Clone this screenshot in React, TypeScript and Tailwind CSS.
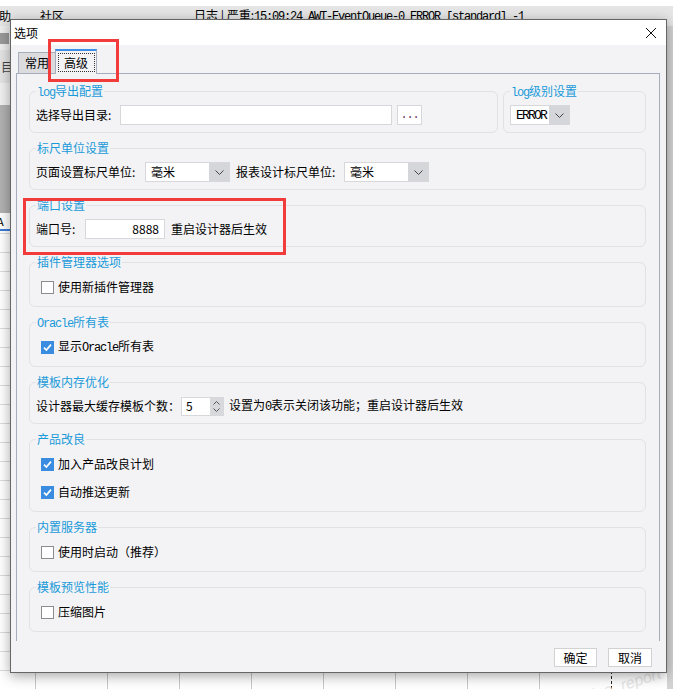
import React from "react";

function Mono({ children }: { children: React.ReactNode }) {
  return (
    <span className="font-['Liberation_Mono',monospace] text-[12px] tracking-[-1.2px]">
      {children}
    </span>
  );
}

function Chevron() {
  return (
    <svg width="9" height="5" viewBox="0 0 9 5">
      <path d="M0.5 0.5 L4.5 4.5 L8.5 0.5" fill="none" stroke="#444" strokeWidth="1" />
    </svg>
  );
}

function Check({ checked }: { checked: boolean }) {
  return checked ? (
    <span className="w-[13px] h-[13px] bg-[#3a8ce0] flex items-center justify-center shrink-0">
      <svg width="11" height="11" viewBox="0 0 11 11">
        <path d="M2 5.6 L4.4 8 L9 2.6" fill="none" stroke="white" strokeWidth="1.7" />
      </svg>
    </span>
  ) : (
    <span className="w-[13px] h-[13px] bg-white border border-[#8c8c8c] shrink-0" />
  );
}

function Group({
  title,
  children,
  className,
}: {
  title: React.ReactNode;
  children: React.ReactNode;
  className: string;
}) {
  return (
    <fieldset className={className}>
      <legend className="px-px text-[12px] leading-[14px] h-[14px] text-[#1a9ad9]">{title}</legend>
      {children}
    </fieldset>
  );
}

function Combo({ text, w, mono }: { text: string; w: string; mono?: boolean }) {
  return (
    <div className={`flex h-[20px] ${w} border border-[#d8d8dc] bg-white shrink-0`}>
      <div className="flex-1 flex items-center pl-[5px] text-black">
        {mono ? (
          <span className="font-['Liberation_Mono',monospace] text-[13px] tracking-[-1.8px]">{text}</span>
        ) : (
          text
        )}
      </div>
      <div className="w-[20px] bg-[#d5d6da] flex items-center justify-center">
        <Chevron />
      </div>
    </div>
  );
}

function CheckRow({ checked, children }: { checked: boolean; children: React.ReactNode }) {
  return (
    <div className="flex items-center h-[20px] pl-[5px] gap-[4px] text-[12px] leading-none text-black">
      <Check checked={checked} />
      <span>{children}</span>
    </div>
  );
}

const groupText = "border border-[#e1e1e6] rounded-[6px] px-[6px] pt-[7px] pb-[7px]";
const groupCheck = "border border-[#e1e1e6] rounded-[6px] px-[6px] pt-[8px] pb-[9px] mt-[8px]";

export default function App() {
  const rows = Array.from({ length: 24 });
  return (
    <div className="relative w-[673px] h-[689px] overflow-hidden bg-white font-['Noto_Sans_CJK_SC',sans-serif] text-black">
      {/* background application */}
      <div className="flex flex-col h-full">
        <div className="h-[6px] bg-white" />
        <div className="h-[22px] bg-[#e5e5e5] flex items-center whitespace-nowrap text-[12px] leading-none">
          <span className="ml-[-1px]">助</span>
          <span className="ml-[29px]">社区</span>
          <span className="ml-[130px]">
            日志 | 严重:<Mono>15:09:24 AWT-EventQueue-0 ERROR [standard] -1</Mono>
          </span>
        </div>
        <div className="flex-1 flex">
          <div className="flex-1 flex flex-col">
            <div className="h-[205px] flex">
              <div className="w-[10px] flex flex-col">
                <div className="h-[24px] bg-[#eeeeee] flex items-center">
                  <span className="w-[9px] h-[11px] bg-[#9a9a9a]" />
                </div>
                <div className="h-[33px] bg-[#e4e4e4] flex items-center text-[12px] text-[#444] overflow-hidden">
                  <span className="ml-[1px]">目</span>
                </div>
                <div className="h-[22px] bg-[#f1f1f1]" />
                <div className="h-[108px] bg-[#b1b1b1]" />
                <div className="h-[18px] bg-white border-b-2 border-[#3b7dd8] text-[11px] leading-[16px] overflow-hidden">
                  <span className="ml-[-3px]">A</span>
                </div>
              </div>
              <div className="flex-1 bg-[#e8e8e8]" />
            </div>
            <div className="flex-1 pt-[2px] overflow-hidden">
              {rows.map((_, i) => (
                <div key={i} className="h-[19px] flex border-t border-[#dadada]">
                  <div className="w-[36px] border-r border-[#c8c8c8]" />
                  <div className="w-[72px] border-r border-[#c8c8c8]" />
                  <div className="w-[72px] border-r border-[#c8c8c8]" />
                  <div className="w-[72px] border-r border-[#c8c8c8]" />
                  <div className="w-[72px] border-r border-[#c8c8c8]" />
                  <div className="w-[72px] border-r border-[#c8c8c8]" />
                  <div className="w-[72px] border-r border-[#c8c8c8]" />
                  <div className="w-[72px] border-r border-[#c8c8c8]" />
                  <div className="w-[72px] border-r border-dashed border-r-[#222]" />
                  <div className="flex-1" />
                </div>
              ))}
            </div>
          </div>
          <div className="w-[6px] bg-[#d4d4d4]" />
        </div>
      </div>
      <span className="absolute left-[586px] top-[677px] -rotate-[18deg] italic text-[16px] leading-none text-[#e6e6e6] font-['Liberation_Sans',sans-serif]">
        fine_report
      </span>

      {/* dialog */}
      <div className="absolute left-[10px] top-[19px] w-[657px] h-[654px] border border-[#666] bg-[#f3f3f5] shadow-[0_3px_12px_rgba(0,0,0,0.35)] flex flex-col">
        <div className="h-[25px] bg-white flex items-center justify-between pl-[3px] pr-[10px] text-[12px] leading-none">
          <span>选项</span>
          <svg width="10" height="10" viewBox="0 0 10 10">
            <path d="M0 0 L10 10 M10 0 L0 10" stroke="#111" strokeWidth="1" />
          </svg>
        </div>

        {/* tabs */}
        <div className="h-[28px] flex items-end pl-[7px] text-[12px] leading-none">
          <div className="w-[37px] h-[21px] bg-[#dcdcdf] border-l border-t border-[#a6aebe] flex items-center justify-center">
            常用
          </div>
          <div className="relative z-10 w-[42px] h-[25px] mb-[-1px] bg-[#f3f3f5] border-x border-[#a6aebe] border-t-2 border-t-[#3d8ee6] flex justify-center pt-[2px]">
            <span className="w-[37px] h-[19px] border border-dotted border-[#333] flex items-center justify-center">
              高级
            </span>
          </div>
        </div>

        {/* panel */}
        <div className="ml-[5px] mr-[6px] h-[568px] border-t border-x border-[#a6aebe] pt-[10px] pl-[12px] pr-[13px] text-[12px] leading-none">
          <div className="flex">
            <Group title={<><Mono>log</Mono>导出配置</>} className={`w-[469px] ${groupText}`}>
              <div className="flex items-center h-[20px]">
                <span className="w-[84px] shrink-0">选择导出目录:</span>
                <div className="w-[272px] h-[20px] bg-white border border-[#d8d8dc]" />
                <div className="ml-[5px] w-[25px] h-[20px] bg-white border border-[#d8d8dc] flex items-center justify-center text-[#6b3b6b]">
                  <Mono>...</Mono>
                </div>
              </div>
            </Group>
            <Group title={<><Mono>log</Mono>级别设置</>} className={`flex-1 ml-[5px] ${groupText}`}>
              <div className="flex items-center h-[20px]">
                <Combo text="ERROR" w="w-[60px]" mono />
              </div>
            </Group>
          </div>

          <Group title="标尺单位设置" className={`mt-[8px] ${groupText}`}>
            <div className="flex items-center h-[20px]">
              <span className="w-[109px] shrink-0">页面设置标尺单位:</span>
              <Combo text="毫米" w="w-[85px]" />
              <span className="ml-[6px] w-[108px] shrink-0">报表设计标尺单位:</span>
              <Combo text="毫米" w="w-[85px]" />
            </div>
          </Group>

          <Group title="端口设置" className={`mt-[8px] ${groupText}`}>
            <div className="flex items-center h-[20px]">
              <span className="w-[49px] shrink-0">端口号:</span>
              <div className="w-[80px] h-[20px] bg-white border border-[#d8d8dc] flex items-center justify-end pr-[5px]">
                8888
              </div>
              <span className="ml-[6px]">重启设计器后生效</span>
            </div>
          </Group>

          <Group title="插件管理器选项" className={groupCheck}>
            <CheckRow checked={false}>使用新插件管理器</CheckRow>
          </Group>

          <Group title={<><Mono>Oracle</Mono>所有表</>} className={groupCheck}>
            <CheckRow checked={true}>
              显示<Mono>Oracle</Mono>所有表
            </CheckRow>
          </Group>

          <Group title="模板内存优化" className={`mt-[8px] ${groupText}`}>
            <div className="flex items-center h-[20px]">
              <span className="w-[145px] shrink-0">设计器最大缓存模板个数：</span>
              <div className="flex w-[43px] h-[19px] border border-[#d8d8dc] bg-white shrink-0">
                <div className="flex-1 flex items-center pl-[4px]">5</div>
                <div className="w-[13px] bg-[#d8d9dd] flex flex-col items-center justify-center gap-[3px]">
                  <svg width="7" height="4" viewBox="0 0 7 4">
                    <path d="M0.5 3.5 L3.5 0.5 L6.5 3.5" fill="none" stroke="#555" strokeWidth="1" />
                  </svg>
                  <svg width="7" height="4" viewBox="0 0 7 4">
                    <path d="M0.5 0.5 L3.5 3.5 L6.5 0.5" fill="none" stroke="#555" strokeWidth="1" />
                  </svg>
                </div>
              </div>
              <span className="ml-[5px] whitespace-nowrap">
                设置为<Mono>0</Mono>表示关闭该功能；重启设计器后生效
              </span>
            </div>
          </Group>

          <Group title="产品改良" className={groupCheck}>
            <div className="flex flex-col gap-[8px]">
              <CheckRow checked={true}>加入产品改良计划</CheckRow>
              <CheckRow checked={true}>自动推送更新</CheckRow>
            </div>
          </Group>

          <Group title="内置服务器" className={groupCheck}>
            <CheckRow checked={false}>使用时启动（推荐）</CheckRow>
          </Group>

          <Group title="模板预览性能" className={groupCheck}>
            <CheckRow checked={false}>压缩图片</CheckRow>
          </Group>
        </div>

        {/* buttons */}
        <div className="flex-1 flex justify-end items-start pt-[7px] pr-[14px] gap-[11px] text-[12px] leading-none">
          <button className="w-[43px] h-[19px] bg-white border border-[#d2d2d2] flex items-center justify-center">
            确定
          </button>
          <button className="w-[44px] h-[19px] bg-white border border-[#d2d2d2] flex items-center justify-center">
            取消
          </button>
        </div>
      </div>

      {/* red annotation boxes */}
      <div className="absolute left-[48px] top-[39px] w-[71px] h-[43px] border-[3px] border-[#f23c3c]" />
      <div className="absolute left-[23px] top-[198px] w-[263px] h-[57px] border-[3px] border-[#f23c3c]" />
    </div>
  );
}
